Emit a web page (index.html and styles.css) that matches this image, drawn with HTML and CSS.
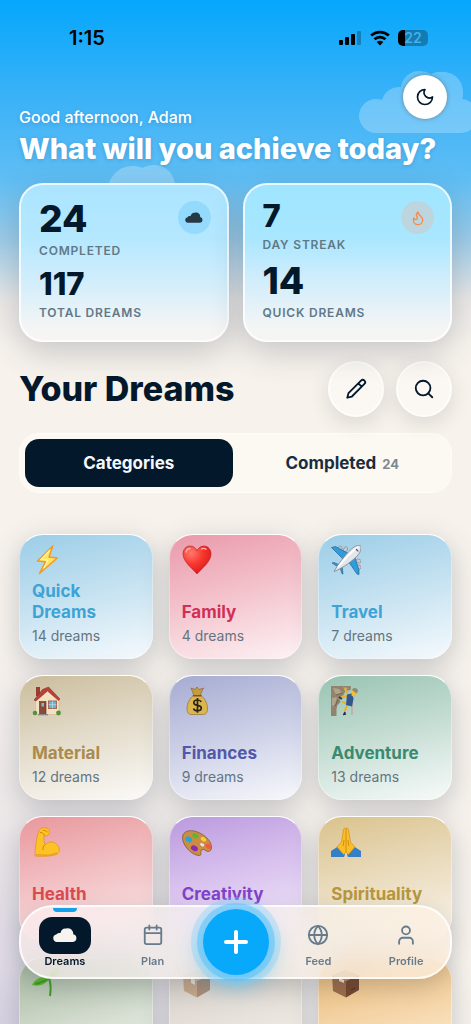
FILE: index.html
```html
<!DOCTYPE html>
<html lang="en">
<head>
  <meta charset="UTF-8">
  <meta name="viewport" content="width=device-width, initial-scale=1">
  <title>Dreams</title>
  <link rel="stylesheet" href="styles.css">
</head>
<body>

  <div class="app">

    <svg class="cloud cloud-right" width="118" height="63" viewBox="0 0 118 63" fill="#fff" aria-hidden="true">
      <path d="M17 62a17 17 0 0 1 0-34c2 0 4 .3 6 1A18 18 0 0 1 42 16C43 7 51 0 60 0c5 0 8 1 12 3a20 20 0 0 1 12-2c12 0 20 9 20 20 0 3 0 5-1 7a17 17 0 0 1-3 34z"/>
    </svg>
    <svg class="cloud cloud-left" width="70" height="30" viewBox="0 0 70 30" fill="#fff" aria-hidden="true">
      <path d="M0 30C0 12 12 1 25 1c4 0 7 .5 10 2 4-2 8-3 13-3 11 0 19 9 20 20l2 10z"/>
    </svg>

    <div class="status-bar">
      <span class="status-time">1:15</span>
      <div class="status-icons">
        <svg width="23" height="16" viewBox="0 0 23 16" aria-hidden="true">
          <rect x="0" y="10" width="4" height="5" rx="1"/>
          <rect x="6" y="7" width="4" height="8" rx="1"/>
          <rect x="12" y="4" width="4" height="11" rx="1"/>
          <rect x="18" y="1" width="4" height="14" rx="1" opacity=".25"/>
        </svg>
        <svg width="20" height="16" viewBox="0 0 20 16" aria-hidden="true">
          <path d="M1.2 5.600a12.800 12.800 0 0 1 17.600 0M4.500 9.300a8 8 0 0 1 11 0" fill="none" stroke="#000" stroke-width="2.800"/>
          <path d="M10 15.500l-3.300-3.400a4.700 4.700 0 0 1 6.600 0z"/>
        </svg>
        <div class="battery"><span>22</span></div>
      </div>
    </div>

    <header class="header">
      <div class="header-row">
        <p class="greeting">Good afternoon, Adam</p>
        <button class="theme-btn" aria-label="Toggle dark mode">
          <svg class="line" width="20" height="20" viewBox="0 0 24 24"><path d="M12 3a6.500 6.500 0 0 0 9 9 9 9 0 1 1-9-9z"/></svg>
        </button>
      </div>
      <h1>What will you achieve today?</h1>
    </header>

    <section class="stats">
      <div class="stat-card stat-card-left">
        <div class="stat-icon">
          <svg width="18" height="11" viewBox="0 0 24 14" fill="#263a45" aria-hidden="true"><path d="M4 14a3.800 3.800 0 0 1-.8-7.500C4 5.500 5.500 4.800 7.500 5 8 2 10.500.2 13 .7 14 0 18 0 19.500 3c.7 1 .8 2.200.7 3.300A3.900 3.900 0 0 1 20 14z"/></svg>
        </div>
        <div class="stat">
          <div class="stat-num big">24</div>
          <div class="stat-label">COMPLETED</div>
        </div>
        <div class="stat">
          <div class="stat-num">117</div>
          <div class="stat-label">TOTAL DREAMS</div>
        </div>
      </div>
      <div class="stat-card">
        <div class="stat-icon fire">
          <svg class="line" width="16" height="16" viewBox="0 0 24 24" aria-hidden="true"><path d="M8.500 14.500A2.500 2.500 0 0 0 11 12c0-1.380-.5-2-1-3-1.070-2.140-.22-4.050 2-6 .5 2.500 2 4.900 4 6.500 2 1.600 3 3.500 3 5.500a7 7 0 1 1-14 0c0-1.150.43-2.290 1-3a2.500 2.500 0 0 0 2.500 2.500z"/></svg>
        </div>
        <div class="stat">
          <div class="stat-num">7</div>
          <div class="stat-label">DAY STREAK</div>
        </div>
        <div class="stat">
          <div class="stat-num big">14</div>
          <div class="stat-label">QUICK DREAMS</div>
        </div>
      </div>
    </section>

    <main>
      <div class="section-head">
        <h2>Your Dreams</h2>
        <div class="actions">
          <button class="round-btn" aria-label="Edit">
            <svg class="line" width="22" height="22" viewBox="0 0 24 24"><path d="M17.500 2.800a2.600 2.600 0 0 1 3.700 3.700L7.500 20.200 2.500 21.500l1.300-5zM14.500 5.800l3.700 3.700"/></svg>
          </button>
          <button class="round-btn" aria-label="Search">
            <svg class="line" width="22" height="22" viewBox="0 0 24 24"><circle cx="11" cy="11" r="8"/><path d="M21 21l-4.300-4.300"/></svg>
          </button>
        </div>
      </div>

      <div class="tabs">
        <button class="tab active">Categories</button>
        <button class="tab">Completed <span class="tab-count">24</span></button>
      </div>

      <div class="grid">
        <a class="card blue" href="#quick">
          <svg class="emoji" viewBox="0 0 30 30" aria-hidden="true">
            <path d="M20.700 1L5.500 16l8 .8L7.500 28.500 25.200 13l-8.200-1z" fill="#ffe45c" stroke="#f39a1d" stroke-width="1.500" stroke-linejoin="round"/>
            <path d="M18 5L9 14.500l7 .5-4 8" fill="none" stroke="#fff6b8" stroke-width="1.200"/>
          </svg>
          <h3>Quick Dreams</h3>
          <p>14 dreams</p>
        </a>

        <a class="card pink" href="#family">
          <svg class="emoji" viewBox="0 0 30 30" aria-hidden="true">
            <defs><radialGradient id="heart" cx=".3" cy=".25" r=".8"><stop offset="0" stop-color="#ff7a6d"/><stop offset=".5" stop-color="#f8382f"/><stop offset="1" stop-color="#d81a1a"/></radialGradient></defs>
            <path d="M15 29C11 24 1 17 1 9c0-4.500 3-8 7-8 3.500 0 6 2 7 5 1-3 3.500-5 7-5 4 0 7 3.500 7 8 0 8-10 15-14 20z" fill="url(#heart)" stroke="#b91717" stroke-width=".6"/>
            <path d="M4 7c.5-2 2-3.500 4-3.500M19.500 4c1-.7 3-.8 4.500.3" fill="none" stroke="#ffb5a8" stroke-width="1.300" stroke-linecap="round"/>
          </svg>
          <h3>Family</h3>
          <p>4 dreams</p>
        </a>

        <a class="card blue" href="#travel">
          <svg class="emoji" viewBox="0 0 30 30" aria-hidden="true">
            <g fill="#c6cbd2" stroke="#68737d" stroke-width=".5">
              <rect x="7.500" y="1" width="3.500" height="5" rx="1.500" transform="rotate(25 9 3)"/><rect x="13" y="2" width="3.500" height="5" rx="1.500" transform="rotate(25 15 4)"/>
              <rect x="25" y="14" width="5" height="3.500" rx="1.500" transform="rotate(25 27 16)"/><rect x="25" y="20" width="5" height="3.500" rx="1.500" transform="rotate(25 27 22)"/>
            </g>
            <path d="M.5 2.500l4-1L20 10l-6 6zM28 29.500l-2-.5-9-13 6-6 5 15zM1 18l2-.5 7 3-2 2zM12 29l-1-.3-2-6.200 2-2z" fill="#2e9ddd" stroke="#1c587f" stroke-width=".6"/>
            <path d="M3 26.500C7 19 17 6 23 2c3-2 7-2 7 0s-.5 5-3 8C22 15.500 12 23 3 26.500z" fill="#e4e6eb" stroke="#747a87" stroke-width=".7"/>
            <path d="M7 22C13 15 21 6 27 2" fill="none" stroke="#fff" stroke-width="1.700"/>
            <path d="M25 4l2.300 2.300" stroke="#4d5764" stroke-width="1.200"/>
          </svg>
          <h3>Travel</h3>
          <p>7 dreams</p>
        </a>

        <a class="card sand" href="#material">
          <svg class="emoji" viewBox="0 0 30 30" aria-hidden="true">
            <rect x="4" y="1" width="4" height="9" fill="#9b3b31"/>
            <path d="M3.500 13L15 3l12 10v15.500H3.500z" fill="#f3e2c2" stroke="#c9ae87" stroke-width=".5"/>
            <path d="M2 14L10.500 3.500 16.500 1l11.500 12-1.500 1.500L15.500 5 4 15z" fill="#b84239" stroke="#7d2824" stroke-width=".5"/>
            <rect x="7.500" y="15.500" width="6.500" height="13" fill="#8b4a36" stroke="#5e3022" stroke-width=".6"/>
            <rect x="9.500" y="17" width="2.500" height="3.500" fill="#79b9dd"/>
            <rect x="16.500" y="15" width="8" height="7.500" fill="#5eb4e5" stroke="#a4694e"/>
            <path d="M20.500 15v7.500M16.500 18.700h8" stroke="#e3eef1" stroke-width=".5"/>
            <rect x="6" y="28" width="10" height="1.300" fill="#83868a"/>
            <circle cx="3" cy="27" r="2.300" fill="#4e9438"/><circle cx="26.500" cy="27" r="2.400" fill="#4e9438"/>
          </svg>
          <h3>Material</h3>
          <p>12 dreams</p>
        </a>

        <a class="card indigo" href="#finances">
          <svg class="emoji" viewBox="0 0 30 30" aria-hidden="true">
            <path d="M9 2l4 1.500L15 1l2 2.500L21.500 2l-3.500 7.500h-6z" fill="#c79a3e" stroke="#80601d" stroke-width=".6"/>
            <path d="M11.500 9.500h7.500c4 3 6.500 8 6.500 13.500 0 4-2 5.500-5 5.500H10c-3 0-5-1.500-5-5.500 0-5.500 2.500-10.500 6.500-13.500z" fill="#dcb64c" stroke="#876821" stroke-width=".6"/>
            <path d="M11.500 9.800h7.500" stroke="#7d5521" stroke-width="1.600" stroke-linecap="round"/>
            <path d="M19.200 16c-.6-1.400-2-2-3.700-2-2.200 0-3.700 1-3.700 2.700 0 3.800 7.500 1.600 7.500 5.400 0 1.700-1.500 2.700-3.800 2.700-2 0-3.500-.8-4-2.400M15.500 12v14.800" fill="none" stroke="#2b2518" stroke-width="1.700"/>
          </svg>
          <h3>Finances</h3>
          <p>9 dreams</p>
        </a>

        <a class="card green" href="#adventure">
          <svg class="emoji" viewBox="0 0 30 30" aria-hidden="true">
            <path d="M0 0h20l-.5 4-5 1-2 4-4 3 1 4-3 3-1 4v7H0z" fill="#91836d"/>
            <path d="M2 2l6 1 3 4-6 2zM1 12l5-1-2 8-3 1zM12 1l6 1-4 2z" fill="#b1a48b"/>
            <path d="M5 9l6-2M4 20l3-6" stroke="#665a48" stroke-width=".8"/>
            <path d="M21 14v15" stroke="#c79596" stroke-width="1"/>
            <path d="M17 8l-3-5M17 10l-7 1.500M18 19l-6-3M16 19l-2 6" fill="none" stroke="#eeb024" stroke-width="2" stroke-linecap="round"/>
            <path d="M16 8.500l5-1 1.500 5-1.500 8-6-1.500z" fill="#31578e"/>
            <path d="M21.500 9l4-2" stroke="#f3bc2f" stroke-width="2.200" stroke-linecap="round"/>
            <circle cx="22.500" cy="5.500" r="2.500" fill="#f3bd35"/>
            <path d="M21 4c1-3 6-2.500 6 1l-1.500 2.500z" fill="#8d8a7a"/>
            <path d="M8 11l3 2M12 28.500l3-.5M14 26l-1 2.500" stroke="#26364f" stroke-width="1.700"/>
          </svg>
          <h3>Adventure</h3>
          <p>13 dreams</p>
        </a>

        <a class="card red" href="#health">
          <svg class="emoji" viewBox="0 0 30 30" aria-hidden="true">
            <path d="M3 29c0-6 1-17 3.500-24C7 2.500 9 .8 12 .6c3 0 5.500 1.400 5.500 3.800 0 3.200-2 5-5.500 4.300-.5 3 0 6 1 9 4-3.700 9-3.400 12 0 2.500 2.700 3 6 1.500 8C24 29.500 10 29.700 3 29z" fill="#fcc226" stroke="#d78a15" stroke-width=".6"/>
            <path d="M13 17.700c-2 2-2.500 3.300-2 5.300M8 5.500c2 0 3 .3 4.500 3M11 3.500c2-.3 3 .5 4.500 1.500" fill="none" stroke="#d18210" stroke-width="1"/>
            <path d="M4 27.800c7 .7 17 .3 21-2" fill="none" stroke="#eda01d" stroke-width="1.500"/>
          </svg>
          <h3>Health</h3>
          <p></p>
        </a>

        <a class="card purple" href="#creativity">
          <svg class="emoji" viewBox="0 0 30 30" aria-hidden="true">
            <path d="M.5 10C1 4 8 2.500 14 4.500 22 7 30 14 29.500 21c-.5 4-4 4-6 2.500-1.500-1.500-4-1.500-4.500.5s1 4-1.500 4.500C11 29 0 19 .5 10z" fill="#c98d43" stroke="#80501d" stroke-width=".7"/>
            <ellipse cx="20.500" cy="17.500" rx="2.200" ry="1.500" fill="#efe2f8" transform="rotate(30 20 17)"/>
            <ellipse cx="7" cy="12.500" rx="3.500" ry="2.800" fill="#2aa6d3" transform="rotate(30 7 12)"/>
            <ellipse cx="13.500" cy="8.500" rx="3.200" ry="2.300" fill="#5bb82e" transform="rotate(25 13 8)"/>
            <ellipse cx="21.500" cy="12" rx="3" ry="2" fill="#f5cf2d" transform="rotate(30 21 12)"/>
            <ellipse cx="26.500" cy="19" rx="3" ry="2.200" fill="#f05a43" transform="rotate(35 26 19)"/>
            <ellipse cx="12.500" cy="21" rx="3.700" ry="2.600" fill="#8b2bb7" transform="rotate(30 12 21)"/>
          </svg>
          <h3>Creativity</h3>
          <p></p>
        </a>

        <a class="card gold" href="#spirituality">
          <svg class="emoji" viewBox="0 0 30 30" aria-hidden="true">
            <path d="M0 24l7-4.500 7 8-1 2.500H0zM30 24l-7-4.500-7 8 1 2.500h13z" fill="#347fc7"/>
            <path d="M15 2c-.5-1.500-2.200-1-2.500.8L10.500 15 6 20l6.500 7.500L15 25l2.500 2.500L24 20l-4.500-5L17.500 2.800C17.200 1 15.500.5 15 2z" fill="#fcbe27" stroke="#cc8414" stroke-width=".6"/>
            <path d="M15 2v23M13 13l-.8 6M17 13l.8 6" fill="none" stroke="#c97d13" stroke-width=".8"/>
          </svg>
          <h3>Spirituality</h3>
          <p></p>
        </a>

        <a class="card olive" href="#nature" aria-label="Nature">
          <svg class="emoji" viewBox="0 0 30 30" aria-hidden="true">
            <path d="M0 17C3 11 10 7 18 10c-4 6-10 9-18 7z" fill="#5bb52d"/>
            <path d="M18 9C16 4 19 1 27 0c1 6-3 9-9 9z" fill="#6cc43a"/>
            <path d="M3 16c5-1 10-3 14-6 2 6 2 12 1 18" fill="none" stroke="#3f9a22" stroke-width="2"/>
          </svg>
        </a>

        <a class="card stone" href="#other" aria-label="Other">
          <svg class="emoji faded" viewBox="0 0 30 30" aria-hidden="true">
            <path d="M1 7l13-5 14 5-13 6z" fill="#c79b6d"/><path d="M1 7l14 6v16.500L2 23z" fill="#b98a62"/><path d="M28 7l-13 6v16.500L28 22z" fill="#8d5f42"/><path d="M9 10l4 2v5l-4-2z" fill="#f0e4d3"/>
          </svg>
        </a>

        <a class="card orange" href="#more" aria-label="More">
          <svg class="emoji" viewBox="0 0 30 30" aria-hidden="true">
            <path d="M1 7l13-5 14 5-13 6z" fill="#b7895f"/><path d="M1 7l14 6v16.500L2 23z" fill="#9c6c4b"/><path d="M28 7l-13 6v16.500L28 22z" fill="#74482f"/><path d="M8 10l5 2v3l-5-2z" fill="#eadfd0"/><path d="M20 22l4-2" stroke="#4d2e1d"/>
          </svg>
        </a>
      </div>
    </main>
  </div>

  <nav class="nav">
    <a class="nav-item active" href="#dreams">
      <span class="nav-icon">
        <svg width="24" height="14" viewBox="0 0 24 14" fill="#f7f3ee" aria-hidden="true"><path d="M4 14a3.800 3.800 0 0 1-.8-7.500C4 5.500 5.500 4.800 7.500 5 8 2 10.500.2 13 .7 14 0 18 0 19.500 3c.7 1 .8 2.200.7 3.300A3.900 3.900 0 0 1 20 14z"/></svg>
      </span>
      Dreams
    </a>
    <a class="nav-item" href="#plan">
      <span class="nav-icon">
        <svg class="line" width="22" height="22" viewBox="0 0 24 24" aria-hidden="true"><rect x="3" y="4" width="18" height="18" rx="2"/><path d="M8 1.500V6M16 1.500V6M3 10h18"/></svg>
      </span>
      Plan
    </a>
    <button class="add-btn" aria-label="Add dream">
      <svg width="32" height="32" viewBox="0 0 32 32" fill="none" stroke="#fff" stroke-width="4" stroke-linecap="round"><path d="M16 6v20M6 16h20"/></svg>
    </button>
    <a class="nav-item" href="#feed">
      <span class="nav-icon">
        <svg class="line" width="22" height="22" viewBox="0 0 24 24" aria-hidden="true"><circle cx="12" cy="12" r="10"/><path d="M2 12h20M12 2c-5.500 5.800-5.500 14.200 0 20 5.500-5.800 5.500-14.200 0-20z"/></svg>
      </span>
      Feed
    </a>
    <a class="nav-item" href="#profile">
      <span class="nav-icon">
        <svg class="line" width="22" height="22" viewBox="0 0 24 24" aria-hidden="true"><circle cx="12" cy="7" r="4.300"/><path d="M4.500 21.500V19a4 4 0 0 1 4-4h7a4 4 0 0 1 4 4v2.500"/></svg>
      </span>
      Profile
    </a>
  </nav>

</body>
</html>
```

FILE: styles.css
```css
* {
  box-sizing: border-box;
}
body {
  margin: 0;
  font-family: Inter, sans-serif;
  color: #04182c;
  background: #f7f2ec;
}
h1, h2, h3, p {
  margin: 0;
}
a {
  color: inherit;
  text-decoration: none;
}
button {
  font-family: inherit;
  color: inherit;
  padding: 0;
  border: none;
  cursor: pointer;
}
svg {
  display: block;
}
.line {
  fill: none;
  stroke: currentColor;
  stroke-width: 2;
  stroke-linecap: round;
  stroke-linejoin: round;
}

.app {
  position: relative;
  height: 100vh;
  overflow: hidden;
  padding: 0 19px;
  background:
    linear-gradient(180deg, #05a7fc 0, #37b1f8 90px, #60bef4 180px, rgba(148, 200, 232, 0.9) 240px, rgba(222, 222, 224, 0.5) 300px, rgba(247, 242, 236, 0) 345px),
    radial-gradient(circle at 0 100%, #d8d3e3 0, rgba(230, 225, 230, 0.6) 200px, rgba(247, 242, 236, 0) 400px),
    #f7f2ec;
}

/* sky */
.cloud {
  position: absolute;
  opacity: 0.25;
}
.cloud-right {
  top: 71px;
  right: -6px;
}
.cloud-left {
  top: 165px;
  left: 107px;
}

/* status bar */
.status-bar {
  display: flex;
  justify-content: space-between;
  align-items: center;
  height: 75px;
  padding: 0 24px 0 50px;
  color: #000;
}
.status-time {
  font-size: 20px;
  font-weight: 600;
}
.status-icons {
  display: flex;
  align-items: center;
  gap: 8px;
}
.battery {
  width: 30px;
  height: 16px;
  border-radius: 5px;
  background: linear-gradient(90deg, #000 7px, rgba(0, 0, 0, 0.28) 7px);
  color: #45b0e8;
  font-size: 14px;
  font-weight: 600;
  line-height: 16px;
  text-align: center;
}

/* header */
.header {
  position: relative;
  color: #fff;
  text-shadow: 0 1px 4px rgba(0, 50, 90, 0.2);
}
.header-row {
  display: flex;
  justify-content: space-between;
  align-items: flex-end;
}
.greeting {
  font-size: 16px;
  font-weight: 500;
  line-height: 20px;
}
.theme-btn {
  display: flex;
  align-items: center;
  justify-content: center;
  width: 44px;
  height: 44px;
  margin: 0 5px 8px 0;
  border-radius: 50%;
  background: #fff;
  color: #04182c;
  box-shadow: 0 0 4px rgba(80, 70, 60, 0.5);
}
h1 {
  margin-top: 4px;
  font-size: 29px;
  font-weight: 800;
  line-height: 36px;
  white-space: nowrap;
}

/* stats */
.stats {
  position: relative;
  display: grid;
  grid-template-columns: 1fr 1fr;
  gap: 14px;
  margin-top: 16px;
}
.stat-card {
  position: relative;
  display: flex;
  flex-direction: column;
  gap: 8px;
  padding: 14px 18px 19px;
  border: 2px solid rgba(255, 255, 255, 0.75);
  border-radius: 24px;
  background: linear-gradient(180deg, #9fe5ff 0, #a9e7ff 35%, #cdecfc 58%, #f3f5f5 90%, #f7f5f2 100%) border-box;
  box-shadow: 0 10px 32px rgba(40, 60, 80, 0.24);
}
.stat-card-left {
  background: linear-gradient(180deg, #abe4ff 0, #b5e8ff 35%, #d0edfc 60%, #f3f5f5 90%, #f7f5f2 100%) border-box;
}
.stat-icon {
  position: absolute;
  top: 16px;
  right: 16px;
  display: flex;
  align-items: center;
  justify-content: center;
  width: 33px;
  height: 33px;
  border-radius: 50%;
  background: rgba(105, 200, 250, 0.4);
}
.stat-icon.fire {
  background: #bdd5de;
  color: #f98a4b;
}
.stat-num {
  font-size: 31px;
  font-weight: 800;
  line-height: 34px;
}
.stat-num.big {
  font-size: 37px;
  line-height: 40px;
}
.stat-label {
  margin-top: 4px;
  font-size: 12px;
  font-weight: 600;
  line-height: 16px;
  letter-spacing: 0.8px;
  color: #607988;
}

/* your dreams */
.section-head {
  display: flex;
  justify-content: space-between;
  align-items: center;
  margin-top: 19px;
}
h2 {
  font-size: 34px;
  font-weight: 800;
  line-height: 40px;
}
.actions {
  display: flex;
  gap: 12px;
}
.round-btn {
  display: flex;
  align-items: center;
  justify-content: center;
  width: 56px;
  height: 56px;
  border: 2px solid #fffdfa;
  border-radius: 50%;
  background: #fbf8f3;
  box-shadow: 0 6px 20px rgba(40, 50, 60, 0.14);
}
.tabs {
  display: grid;
  grid-template-columns: 1fr 1fr;
  gap: 6px;
  margin-top: 16px;
  padding: 5px;
  border: 1px solid #fffdfa;
  border-radius: 20px;
  background: #fcf8f2;
}
.tab {
  height: 48px;
  border-radius: 14px;
  background: none;
  color: #1a2d3e;
  font-size: 17px;
  font-weight: 700;
}
.tab.active {
  background: #03182b;
  color: #f4f7fb;
}
.tab-count {
  margin-left: 2px;
  color: #7f8890;
  font-size: 13px;
}

/* category cards */
.grid {
  display: grid;
  grid-template-columns: repeat(3, 1fr);
  grid-auto-rows: 125px;
  gap: 16px;
  margin-top: 41px;
}
.card {
  display: flex;
  flex-direction: column;
  padding: 10px 12px 13px;
  border: 1px solid rgba(255, 255, 255, 0.4);
  border-top-color: #fff;
  border-radius: 24px;
  box-shadow: 0 8px 28px rgba(50, 65, 85, 0.26);
}
.emoji {
  width: 30px;
  height: 30px;
  margin-bottom: auto;
}
.faded {
  opacity: 0.6;
}
.card h3 {
  font-size: 17px;
  font-weight: 700;
  line-height: 21px;
}
.card p {
  min-height: 18px;
  margin-top: 4px;
  color: #647582;
  font-size: 14px;
  line-height: 18px;
}
.blue {
  background: linear-gradient(165deg, #9bcde7, #c2e0f0 45%, #f6fafd) border-box;
}
.blue h3 {
  color: #3da3d6;
}
.pink {
  background: linear-gradient(165deg, #ea98aa, #f3c0ca 45%, #fdf3f5) border-box;
}
.pink h3 {
  color: #d32e56;
}
.sand {
  background: linear-gradient(165deg, #cabc9b, #e2dac8 45%, #fcfbf9) border-box;
}
.sand h3 {
  color: #ab8b4c;
}
.indigo {
  background: linear-gradient(165deg, #a5abd2, #c9cde5 45%, #f8f9fc) border-box;
}
.indigo h3 {
  color: #5158a9;
}
.green {
  background: linear-gradient(165deg, #98c3b1, #c2dbd1 45%, #f8fbfa) border-box;
}
.green h3 {
  color: #3a8a6f;
}
.red {
  background: linear-gradient(165deg, #e8979c, #f2bfc2 45%, #faeced) border-box;
}
.red h3 {
  color: #d94b50;
}
.purple {
  background: linear-gradient(165deg, #ba99dd, #d8c1ee 45%, #f4edfa) border-box;
}
.purple h3 {
  color: #8142c9;
}
.gold {
  background: linear-gradient(165deg, #d9c28b, #e9dabb 45%, #f9f5ed) border-box;
}
.gold h3 {
  color: #b8963d;
}
.olive {
  background: linear-gradient(165deg, #9fb49b, #d8dfd3 55%, #f2f4ef) border-box;
}
.stone {
  background: linear-gradient(165deg, #cfc8c1, #e9e4dd 55%, #f7f4f0) border-box;
}
.orange {
  background: linear-gradient(165deg, #e8b876, #f7dab1 55%, #fcf0df) border-box;
}

/* bottom nav */
.nav {
  position: fixed;
  right: 19px;
  bottom: 45px;
  left: 19px;
  display: grid;
  grid-template-columns: 1fr 1fr 78px 1fr 1fr;
  align-items: center;
  height: 74px;
  border: 2px solid rgba(255, 255, 255, 0.8);
  border-radius: 34px;
  background: linear-gradient(100deg, rgba(255, 240, 242, 0.66), rgba(246, 242, 240, 0.66) 40%, rgba(255, 242, 226, 0.66));
  backdrop-filter: blur(16px);
  box-shadow: 0 8px 22px rgba(40, 50, 60, 0.2);
}
.nav-item {
  position: relative;
  display: flex;
  flex-direction: column;
  align-items: center;
  color: #667b8b;
  font-size: 11px;
  font-weight: 600;
  line-height: 14px;
}
.nav-icon {
  display: flex;
  align-items: center;
  justify-content: center;
  width: 52px;
  height: 37px;
  border-radius: 13px;
}
.nav-item.active {
  color: #04182c;
}
.nav-item.active .nav-icon {
  background: #03182b;
}
.nav-item.active::before {
  content: "";
  position: absolute;
  top: -9px;
  width: 24px;
  height: 4px;
  border-radius: 0 0 4px 4px;
  background: #189fe9;
}
.add-btn {
  display: flex;
  align-items: center;
  justify-content: center;
  justify-self: center;
  width: 66px;
  height: 66px;
  border-radius: 50%;
  background: #08a8fb;
  box-shadow: 0 0 0 6px rgba(90, 195, 250, 0.55), 0 0 0 12px rgba(130, 210, 250, 0.35), 0 8px 24px rgba(8, 168, 251, 0.6);
}
```
